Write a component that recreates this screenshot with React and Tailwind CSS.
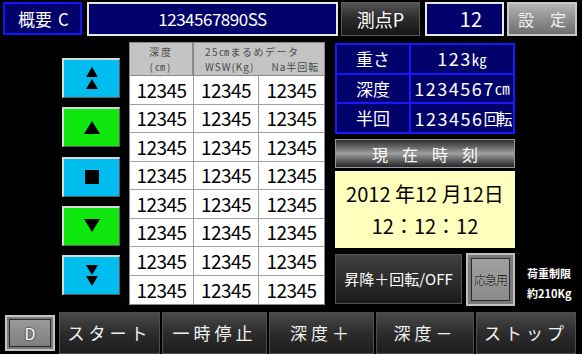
import React from 'react';

const rows = Array.from({ length: 8 });

const Icon = ({ kind }) => {
    if (kind === 'up2') {
        return (
            <svg width="14" height="24" viewBox="0 0 14 24">
                <polygon points="7,0 13,10 1,10" fill="#000" />
                <polygon points="7,12 13,22 1,22" fill="#000" />
            </svg>
        );
    }
    if (kind === 'down2') {
        return (
            <svg width="14" height="24" viewBox="0 0 14 24">
                <polygon points="1,1 13,1 7,11" fill="#000" />
                <polygon points="1,12 13,12 7,22" fill="#000" />
            </svg>
        );
    }
    if (kind === 'up') {
        return (
            <svg width="16" height="14" viewBox="0 0 16 14">
                <polygon points="8,0 16,13 0,13" fill="#000" />
            </svg>
        );
    }
    if (kind === 'down') {
        return (
            <svg width="16" height="14" viewBox="0 0 16 14">
                <polygon points="0,0 16,0 8,13" fill="#000" />
            </svg>
        );
    }
    return <div className="w-[14px] h-[14px] bg-black" />;
};

const SideButton = ({ kind, green }) => (
    <div
        className={`h-[40px] flex items-center justify-center border-t-2 border-l-2 border-[#d8d8d8] border-b border-r border-b-[#5a5a5a] border-r-[#5a5a5a] ${green ? 'bg-[#0ee60e]' : 'bg-[#00bdf0]'}`}
    >
        <Icon kind={kind} />
    </div>
);

const BottomButton = ({ label, w }) => (
    <div
        className={`${w} flex items-center justify-center border border-[#4e4e4e] bg-linear-to-b from-[#4a4a4a] via-[#2c2c2c] to-[#1e1e1e] text-[17px] tracking-[4px] text-[#f2f2f2]`}
    >
        {label}
    </div>
);

const info = [
    ['重さ', '123', '㎏', 'text-[15px] tracking-[0px]'],
    ['深度', '1234567', '㎝', 'text-[15px] tracking-[0px]'],
    ['半回', '123456', '回転', 'text-[16px] tracking-[-3px]'],
];

const cell = 'flex items-center justify-center border-[#a0a0a0] text-[19px] leading-[20px] tracking-[-0.5px] min-h-0';

export default function App() {
    return (
        <div className="w-[582px] h-[354px] bg-black flex flex-col overflow-hidden text-white font-['Noto_Sans_CJK_JP','Noto_Sans',sans-serif]">
            {/* top row */}
            <div className="flex h-[34px] mt-[2px] pl-[3px]">
                <div className="w-[79px] h-[33px] border-2 border-[#1414ff] bg-[#00006a] flex items-center pl-[13px] text-[17px]">
                    概要<span className="ml-[6px]">C</span>
                </div>
                <div className="ml-[5px] w-[251px] border-2 border-[#e6e6e6] bg-[#00006a] flex items-center justify-center text-[17px] tracking-[-0.5px]">
                    1234567890SS
                </div>
                <div className="ml-[3px] w-[79px] border border-[#5a5a5a] bg-linear-to-b from-[#555] via-[#2a2a2a] to-[#151515] flex items-center justify-center text-[18px]">
                    測点P
                </div>
                <div className="ml-[5px] w-[79px] border-2 border-[#e6e6e6] bg-[#00006a] flex items-center justify-end pr-[20px] text-[20px]">
                    12
                </div>
                <div className="ml-[3px] w-[70px] border-2 border-[#c8c8c8] bg-linear-to-b from-[#b4b4b4] to-[#6e6e6e] flex items-center justify-between px-[9px] text-[16px] text-[#f0f0f0]">
                    <span>設</span>
                    <span>定</span>
                </div>
            </div>

            {/* middle */}
            <div className="flex mt-[6px] h-[270px]">
                <div className="ml-[62px] w-[58px] mt-[16px] flex flex-col gap-[9.25px]">
                    <SideButton kind="up2" />
                    <SideButton kind="up" green />
                    <SideButton kind="stop" />
                    <SideButton kind="down" green />
                    <SideButton kind="down2" />
                </div>

                <div className="ml-[9px] w-[196px] h-[263px] border border-[#8a8a8a] bg-white flex flex-col text-black">
                    <div className="h-[33px] shrink-0 flex bg-[#c4c4c4] border-b border-[#8a8a8a] text-[10px] text-[#4a4a4a] leading-[15px]">
                        <div className="w-[64px] border-r-2 border-[#8a8a8a] flex flex-col items-center justify-center tracking-[2px]">
                            <span>深度</span>
                            <span>(㎝)</span>
                        </div>
                        <div className="flex-1 flex flex-col justify-center pl-[11px]">
                            <span className="tracking-[1.5px]">25㎝まるめデータ</span>
                            <div className="flex tracking-[1px]">
                                <span>WSW(Kg)</span>
                                <span className="ml-[17px]">Na半回転</span>
                            </div>
                        </div>
                    </div>
                    <div className="flex-1 min-h-0 grid grid-cols-[64px_65px_65px] grid-rows-[repeat(8,minmax(0,1fr))]">
                        {rows.map((_, i) => (
                            <React.Fragment key={i}>
                                <div className={`${cell} border-r ${i < 7 ? 'border-b' : ''}`}>12345</div>
                                <div className={`${cell} border-r ${i < 7 ? 'border-b' : ''}`}>12345</div>
                                <div className={`${cell} ${i < 7 ? 'border-b' : ''}`}>12345</div>
                            </React.Fragment>
                        ))}
                    </div>
                </div>

                <div className="ml-[10px] mt-[1px] flex flex-col">
                    <div className="w-[180px] h-[91px] border-2 border-[#1818ff] bg-[#00006a] flex flex-col">
                        {info.map(([k, v, unit, uc], i) => (
                            <div key={k} className={`flex-1 flex min-h-0 ${i < 2 ? 'border-b-2 border-[#1818ff]' : ''}`}>
                                <div className="w-[74px] border-r-2 border-[#1818ff] flex items-center justify-center text-[17px]">{k}</div>
                                <div className="flex-1 flex items-center justify-center whitespace-nowrap overflow-hidden text-[18px] tracking-[1.5px]">
                                    {v}
                                    <span className={uc}>{unit}</span>
                                </div>
                            </div>
                        ))}
                    </div>
                    <div className="w-[180px] h-[29px] mt-[5px] border border-[#9a9a9a] bg-linear-to-b from-[#2e2e2e] via-[#a0a0a0] to-[#262626] flex items-center justify-center text-[16px] tracking-[14px] pl-[14px]">
                        現在時刻
                    </div>
                    <div className="w-[180px] h-[77px] mt-[3px] bg-[#ffffbe] text-black flex flex-col items-center justify-center gap-[6px] text-[20px] leading-[26px]">
                        <span>2012 年12 月12日</span>
                        <span>12：12：12</span>
                    </div>
                    <div className="flex mt-[6px] items-start">
                        <div className="w-[127px] h-[50px] border border-[#555] bg-linear-to-b from-[#404040] to-[#1c1c1c] flex items-center justify-center text-[15px]">
                            昇降＋回転/OFF
                        </div>
                        <div className="ml-[4px] -mt-[1px] w-[49px] h-[53px] border-2 border-[#c0c0c0] bg-[#7a7a7a] p-[3px]">
                            <div className="w-full h-full border border-[#2a2a2a] bg-linear-to-b from-[#a0a0a0] to-[#8a8a8a] flex items-center justify-center text-[12px] text-[#1a1a1a] tracking-[-1px] [text-shadow:0_0_1px_#fff]">
                                応急用
                            </div>
                        </div>
                        <div className="ml-[12px] mt-[9px] flex flex-col text-[11px] font-bold leading-[20px]">
                            <span>荷重制限</span>
                            <span>約210Kg</span>
                        </div>
                    </div>
                </div>
            </div>

            {/* bottom bar */}
            <div className="flex h-[42px] pl-[5px]">
                <div className="w-[50px] my-[3px] border-2 border-[#c4c4c4] bg-[#7a7a7a] p-[2px]">
                    <div className="w-full h-full border border-[#2a2a2a] bg-linear-to-b from-[#9a9a9a] to-[#7e7e7e] flex items-center justify-center text-[16px] [text-shadow:0_0_2px_#000]">
                        D
                    </div>
                </div>
                <div className="ml-[4px] flex gap-[2px]">
                    <BottomButton label="スタート" w="w-[101px]" />
                    <BottomButton label="一時停止" w="w-[105px]" />
                    <BottomButton label="深度＋" w="w-[105px]" />
                    <BottomButton label="深度－" w="w-[98px]" />
                    <BottomButton label="ストップ" w="w-[100px]" />
                </div>
            </div>
        </div>
    );
}
